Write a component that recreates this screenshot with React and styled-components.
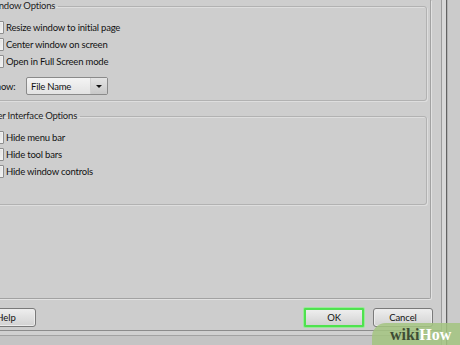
import styled, { createGlobalStyle } from "styled-components";

const GlobalStyle = createGlobalStyle`
    html, body {
        margin: 0;
        padding: 0;
        background: #cdcdcd;
        overflow: hidden;
    }
    body {
        font-family: Lato, "Noto Sans", sans-serif;
        color: #121212;
    }
`;

const App = () => {
    return (
        <Screen>
            <GlobalStyle />
            <Main>
                <TabPage>
                    <GroupBox>
                        <Legend>Window Options</Legend>
                        <CheckRow label="Resize window to initial page" />
                        <CheckRow label="Center window on screen" />
                        <CheckRow label="Open in Full Screen mode" />
                        <ShowRow>
                            <Label>Show:</Label>
                            <Select>
                                <span>File Name</span>
                                <SelectArrow />
                            </Select>
                        </ShowRow>
                    </GroupBox>
                    <GroupBox $bottom={24}>
                        <Legend>User Interface Options</Legend>
                        <CheckRow label="Hide menu bar" />
                        <CheckRow label="Hide tool bars" />
                        <CheckRow label="Hide window controls" />
                    </GroupBox>
                </TabPage>
                <ButtonBar>
                    <Button>Help</Button>
                    <Spacer />
                    <Button $focused>OK</Button>
                    <Button>Cancel</Button>
                </ButtonBar>
                <BottomEdge />
            </Main>
            <FrameEdge />
            <Watermark>
                wiki<span>How</span>
            </Watermark>
        </Screen>
    );
};

const CheckRow = ({ label }) => (
    <Row>
        <CheckBox />
        <span>{label}</span>
    </Row>
);

const Screen = styled.div`
    position: relative;
    width: 460px;
    height: 345px;
    overflow: hidden;
    display: flex;
`;

const Main = styled.div`
    margin-left: -24px;
    width: 465px;
    flex-shrink: 0;
    display: flex;
    flex-direction: column;
`;

const TabPage = styled.div`
    box-sizing: border-box;
    width: 455px;
    height: 299px;
    padding: 0 3px 0 6px;
    border-right: 1px solid #a2a2a2;
    border-bottom: 1px solid #a2a2a2;
    border-bottom-right-radius: 2px;
    box-shadow: 1px 1px 0 #e2e2e2;
    background: #cecece;
`;

const GroupBox = styled.fieldset`
    margin: 0 0 9px 0;
    padding: 7px 0 ${(props) => props.$bottom || 5}px 8px;
    border: 1px solid #b2b2b2;
    border-radius: 3px;
    box-shadow: inset 1px 1px 0 #dedede, 1px 1px 0 #dedede;
`;

const Legend = styled.legend`
    margin-left: -7px;
    padding: 0 3px;
    font-size: 9.5px;
    letter-spacing: -0.2px;
    line-height: 12px;
    color: #222;
`;

const Row = styled.div`
    height: 17px;
    display: flex;
    align-items: center;
    gap: 2px;
    font-size: 9.5px;
    letter-spacing: -0.2px;
    white-space: nowrap;
`;

const CheckBox = styled.span`
    box-sizing: border-box;
    width: 13px;
    height: 13px;
    border: 1px solid #8e8e8e;
    border-radius: 1px;
    background: linear-gradient(135deg, #d8d8d8, #f4f4f4);
    box-shadow: inset 0 0 0 1px #f0f0f0;
`;

const ShowRow = styled.div`
    margin-top: 7px;
    display: flex;
    align-items: center;
    gap: 9px;
    font-size: 9.5px;
    letter-spacing: -0.2px;
`;

const Label = styled.span`
    width: 26px;
`;

const Select = styled.div`
    box-sizing: border-box;
    width: 82px;
    height: 18px;
    border: 1px solid #8a8a8a;
    border-radius: 2px;
    background: linear-gradient(#f4f4f4, #e2e2e2);
    display: flex;
    align-items: center;
    justify-content: space-between;
    padding-left: 4px;
`;

const SelectArrow = styled.span`
    width: 16px;
    height: 16px;
    border-left: 1px solid #d0d0d0;
    background: linear-gradient(#e4e4e4, #c8c8c8);
    display: flex;
    align-items: center;
    justify-content: center;
    &::after {
        content: "";
        border-left: 3px solid transparent;
        border-right: 3px solid transparent;
        border-top: 3px solid #111;
    }
`;

const ButtonBar = styled.div`
    display: flex;
    align-items: flex-start;
    gap: 9px;
    padding: 9px 8px 3px 0;
`;

const Spacer = styled.div`
    flex: 1;
`;

const Button = styled.button`
    box-sizing: border-box;
    width: 60px;
    height: 19px;
    padding: 0;
    font-family: Lato, "Noto Sans", sans-serif;
    font-size: 9.5px;
    letter-spacing: -0.1px;
    color: #121212;
    border: ${(props) => (props.$focused ? "2px solid #4fe24f" : "1px solid #7a7a7a")};
    border-radius: ${(props) => (props.$focused ? "1px" : "3px")};
    background: linear-gradient(#eeeeee, #e0e0e0 50%, #d2d2d2);
    box-shadow: ${(props) => (props.$focused ? "0 0 0 1px #9ae89a" : "inset 0 0 0 1px #ececec")};
`;

const BottomEdge = styled.div`
    flex: 1;
    background: linear-gradient(
        #8c8c8c 0 1px,
        #d0d0d0 1px 5px,
        #a2a2a2 5px 6px,
        #c4c4c4 6px
    );
`;

const FrameEdge = styled.div`
    flex: 1;
    background: linear-gradient(
        to right,
        #9c9c9c 0 1px,
        #d8d8d8 1px 5px,
        #626262 5px 6px,
        #b2b2b2 6px 7px,
        #cbcbcb 7px
    );
`;

const Watermark = styled.div`
    position: absolute;
    right: 0;
    bottom: 0;
    width: 88px;
    height: 22px;
    padding-left: 18px;
    box-sizing: border-box;
    border-top-left-radius: 14px;
    background: rgba(163, 196, 128, 0.85);
    font-family: "Liberation Serif", serif;
    font-weight: bold;
    font-size: 16px;
    line-height: 24px;
    color: #3e4d34;
    & span {
        color: #ffffff;
    }
`;

export default App;
